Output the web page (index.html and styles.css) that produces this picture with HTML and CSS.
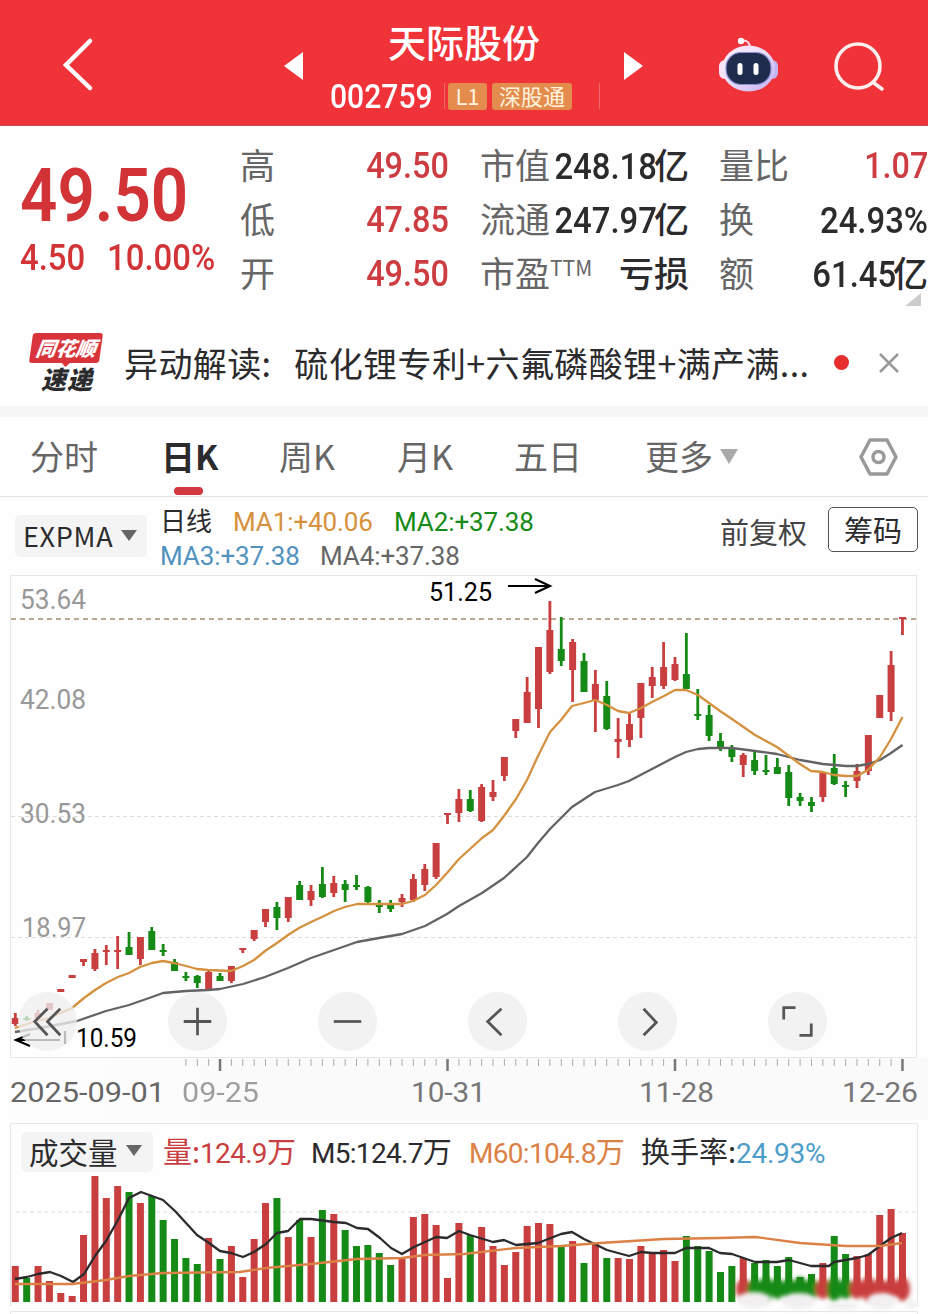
FILE: index.html
```html
<!DOCTYPE html>
<html lang="zh-CN">
<head>
<meta charset="utf-8">
<title>天际股份 002759</title>
<link rel="stylesheet" href="styles.css">
</head>
<body>
<div class="wrap">
	<header class="top">
		<a class="back" href="#"><svg width="34" height="56" viewBox="0 0 34 56"><path d="M30 5 6 29 30 52"/></svg></a>
		<a class="prev" href="#"><svg width="20" height="30" viewBox="0 0 20 30"><path d="M19 1v28L0 15z"/></svg></a>
		<div class="stock">
			<h1>天际股份</h1>
			<div class="code_row">
				<span class="code"><b class="num">002759</b></span>
				<i class="bar"></i>
				<span class="badge l1">L1</span>
				<span class="badge sgt">深股通</span>
				<i class="bar last"></i>
			</div>
		</div>
		<a class="next" href="#"><svg width="20" height="30" viewBox="0 0 20 30"><path d="M1 1v28l19-14z"/></svg></a>
		<a class="robot" href="#">
			<svg width="60" height="58" viewBox="0 0 60 58">
				<defs>
					<linearGradient id="shell" x1="0" y1="0" x2="1" y2="1">
						<stop offset="0" stop-color="#fff0fa"/><stop offset=".5" stop-color="#e9dcfa"/><stop offset="1" stop-color="#c5aef0"/>
					</linearGradient>
				</defs>
				<path d="M21 5q9-2 10 6" fill="none" stroke="#fbdcea" stroke-width="2"/>
				<circle cx="22" cy="5" r="3.2" fill="#fff"/>
				<rect x="0" y="24" width="12" height="19" rx="6" fill="#f7e3f7"/>
				<rect x="47" y="24" width="12" height="19" rx="6" fill="#c4b3f3"/>
				<ellipse cx="29.500" cy="32.500" rx="26.500" ry="23" fill="url(#shell)"/>
				<rect x="7" y="16.500" width="45" height="32" rx="15" fill="#202c4e" stroke="#8e91d8" stroke-width="1.200"/>
				<rect x="18.500" y="27" width="5" height="12" rx="2.500" fill="#fff"/>
				<rect x="34.500" y="27" width="5" height="12" rx="2.500" fill="#fff"/>
			</svg>
		</a>
		<a class="search" href="#"><svg width="54" height="54" viewBox="0 0 54 54"><circle cx="24" cy="25" r="22"/><path d="m40 42 8 6"/></svg></a>
	</header>

	<section class="quote">
		<div class="price">
			<p class="now"><b class="num">49.50</b></p>
			<p class="diff"><b class="num">4.50</b><b class="num pct">10.00%</b></p>
		</div>
		<dl class="c1">
			<div><dt>高</dt><dd class="up"><b class="num">49.50</b></dd></div>
			<div><dt>低</dt><dd class="up"><b class="num">47.85</b></dd></div>
			<div><dt>开</dt><dd class="up"><b class="num">49.50</b></dd></div>
		</dl>
		<dl class="c2">
			<div><dt>市值</dt><dd><b class="num">248.18</b><span>亿</span></dd></div>
			<div><dt>流通</dt><dd><b class="num">247.97</b><span>亿</span></dd></div>
			<div><dt>市盈<sup>TTM</sup></dt><dd><span>亏损</span></dd></div>
		</dl>
		<dl class="c3">
			<div><dt>量比</dt><dd class="up"><b class="num">1.07</b></dd></div>
			<div><dt>换</dt><dd><b class="num">24.93%</b></dd></div>
			<div><dt>额</dt><dd><b class="num">61.45</b><span>亿</span></dd></div>
		</dl>
		<i class="corner"></i>
	</section>

	<section class="news">
		<div class="logo">
			<span class="logo_top">同花顺</span>
			<span class="logo_btm">速递</span>
		</div>
		<p>异动解读:<span>硫化锂专利+六氟磷酸锂+满产满...</span></p>
		<i class="dot"></i>
		<svg class="close" width="22" height="22" viewBox="0 0 22 22"><path d="m2 2 18 18M20 2 2 20"/></svg>
	</section>

	<ul class="tabs">
		<li>分时</li>
		<li class="on">日K</li>
		<li>周K</li>
		<li>月K</li>
		<li>五日</li>
		<li class="more">更多<i class="arrow"></i></li>
		<li class="setting"><svg width="42" height="40" viewBox="0 0 42 40"><path d="M12 3h17l9 17-9 17H12L3 20z"/><circle cx="20.500" cy="20" r="5.500"/></svg></li>
	</ul>

	<section class="indicator">
		<div class="select">EXPMA<i class="arrow"></i></div>
		<div class="ma">
			<p><span class="day">日线</span><span class="ma1">MA1:+40.06</span><span class="ma2">MA2:+37.38</span></p>
			<p><span class="ma3">MA3:+37.38</span><span class="ma4">MA4:+37.38</span></p>
		</div>
		<span class="fq">前复权</span>
		<span class="chip">筹码</span>
	</section>

	<section class="kline">
		<svg id="kline" width="928" height="548" viewBox="0 575 928 548"></svg>
		<div class="tools">
			<button><svg viewBox="0 0 60 60"><path d="M43 17 30 30l13 14M30 17 17 30l13 14"/></svg></button>
			<button><svg viewBox="0 0 60 60"><path d="M16 30h28M30 16v28"/></svg></button>
			<button><svg viewBox="0 0 60 60"><path d="M16 30h28"/></svg></button>
			<button><svg viewBox="0 0 60 60"><path d="M34 17 20 30l14 14"/></svg></button>
			<button><svg viewBox="0 0 60 60"><path d="m26 17 13 14-13 13"/></svg></button>
			<button><svg viewBox="0 0 60 60"><path d="M16 28V16h12M44 32v12H32"/></svg></button>
		</div>
	</section>

	<section class="volume">
		<div class="vol_head">
			<div class="select">成交量<i class="arrow"></i></div>
			<span class="v1">量:<b>124.9</b>万</span>
			<span class="v2"><b>M5:124.7</b>万</span>
			<span class="v3"><b>M60:104.8</b>万</span>
			<span class="v4">换手率:<b>24.93%</b></span>
		</div>
		<svg id="volume" width="928" height="140" viewBox="0 1174 928 140"></svg>
	</section>
</div>
<script src="chart.js"></script>
</body>
</html>
```
FILE: styles.css
```css
* {margin:0; padding:0; box-sizing:border-box}
li {list-style:none}
i {font-style:normal}
a {text-decoration:none; color:inherit}
svg {display:block}
body {
	width:928px;
	height:1314px;
	overflow:hidden;
	background-color:#fefefe;
	font-family:"Noto Sans CJK SC", sans-serif;
	color:#2b2b2d;
}
.wrap {width:928px}
.num {
	display:inline-block;
	font-family:Roboto, "Noto Sans CJK SC", sans-serif;
	font-weight:500;
	transform:scaleX(.9);
	transform-origin:right center;
}

/* header */
.top {
	display:grid;
	grid-template-columns:284px 46px 270px 119px 115px 94px;
	height:126px;
	background-color:#f03239;
	border-bottom:1px solid #c4474f;
	color:#fff;
}
.back {padding:36px 0 0 60px}
.back path {fill:none; stroke:#fff; stroke-width:4.5; stroke-linecap:round}
.prev, .next {padding-top:51px}
.next {padding-left:23px}
.prev path, .next path {fill:#fff}
.stock h1 {
	height:67px;
	padding-top:15px;
	font-size:38px;
	font-weight:500;
	line-height:52px;
	text-align:center;
	text-indent:-2px;
}
.code_row {display:flex; align-items:center; height:58px}
.code {width:114px; height:40px}
.code .num {font-size:34px; line-height:40px; font-weight:500; transform-origin:left center; transform:scaleX(.885)}
.bar {width:1px; height:26px; background-color:#f4686b}
.bar.last {margin-left:27px}
.badge {
	height:27px;
	border-radius:3px;
	background-color:#e38c4d;
	font-size:22px;
	line-height:25px;
	text-align:center;
	color:#fff3df;
}
.l1 {width:39px; margin-left:3px}
.sgt {width:80px; margin-left:5px}
.robot {padding-top:36px}
.search {padding-top:41px}
.search circle, .search path {fill:none; stroke:#ffeeee; stroke-width:3.6; stroke-linecap:round}

/* quote */
.quote {
	position:relative;
	display:grid;
	grid-template-columns:240px 240px 239px 209px;
	height:196px;
	padding-top:13px;
}
.price {padding-left:20px; color:#d23336}
.price .num {transform-origin:left center}
.now {height:93px; padding-top:15px}
.now .num {font-size:74px; line-height:84px; font-weight:600; transform:scaleX(.885)}
.diff {display:flex; height:44px; font-size:37px; line-height:52px}
.diff .num {width:87px; font-weight:500; transform:scaleX(.89)}
.quote dl {width:209px}
.quote dl > div {display:flex; justify-content:space-between; align-items:center; height:54px}
.quote dt {font-size:35px; line-height:55px; height:60px; color:#666; white-space:nowrap}
.quote dt sup {font-size:21px; line-height:1; vertical-align:11px; font-weight:400; letter-spacing:0}
.quote dd {display:flex; align-items:center; font-size:35px; font-weight:500; line-height:55px; white-space:nowrap}
.quote dd span {height:60px; margin-left:-3px}
.quote dd .num {font-size:36.5px; margin-left:-20px}
.quote dd.up {color:#cc3c40}
.quote dd.up .num {font-size:36px}
.corner {
	position:absolute;
	right:7px;
	bottom:16px;
	border-left:16px solid transparent;
	border-bottom:13px solid #ccc;
}

/* news */
.news {
	display:flex;
	align-items:center;
	height:95px;
	padding-bottom:12px;
	border-bottom:11px solid #f6f6f6;
}
.logo {flex:none; width:76px; margin:10px 19px 0 29px; font-style:italic; font-weight:900; text-align:center}
.logo span {display:block}
.logo_top {
	position:relative;
	width:70px;
	height:30px;
	margin-left:2px;
	border-radius:3px;
	background-color:#d9343b;
	color:#fff;
	font-size:20px;
	line-height:29px;
	transform:skewX(-8deg);
}
.logo_top:after {
	content:"";
	position:absolute;
	left:32px;
	top:29px;
	border-top:5px solid #d9343b;
	border-left:5px solid transparent;
	border-right:5px solid transparent;
}
.logo_btm {font-size:25px; line-height:30px; letter-spacing:1px}
.news p {flex:none; width:693px; font-size:34px; white-space:nowrap; padding-top:8px; letter-spacing:.38px}
.news p span {margin-left:23px}
.dot {flex:none; width:15px; height:15px; margin:9px 0 0 17px; border-radius:50%; background-color:#e62e2e}
.close {flex:none; margin:10px 0 0 29px}
.close path {fill:none; stroke:#999; stroke-width:2.5}

/* period tabs */
.tabs {
	display:grid;
	grid-template-columns:161px 118px 118px 117px 131px 213px 70px;
	height:80px;
	border-bottom:1px solid #e4e4e4;
	font-size:34px;
	line-height:77px;
	color:#666;
}
.tabs li:first-child {padding-left:30px}
.tabs li.on {color:#2b2b2d; font-weight:700; position:relative}
.tabs li.on:after {
	content:"";
	position:absolute;
	left:13px;
	bottom:1px;
	width:29px;
	height:8px;
	border-radius:4px;
	background-color:#d2383e;
}
.arrow {
	display:inline-block;
	border-top:11px solid #666;
	border-left:8px solid transparent;
	border-right:8px solid transparent;
}
.more .arrow {margin-left:7px; border-width:15px 9px 0; border-top-color:#aaa; vertical-align:6px}
.setting {padding-top:20px}
.setting path, .setting circle {fill:none; stroke:#999; stroke-width:3.5; stroke-linejoin:round}

/* indicator */
.indicator {display:flex; height:78px; padding-left:15px}
.indicator > * {flex:none}
.select {
	display:flex;
	align-items:center;
	border-radius:5px;
	background-color:#f4f4f4;
	white-space:nowrap;
}
.indicator .select {width:132px; height:42px; margin-top:18px; padding:0 0 1px 8px; font-size:27px; letter-spacing:.7px}
.indicator .select .arrow {margin-left:8px}
.ma {width:573px; padding:8px 0 0 13px; font-family:Roboto, "Noto Sans CJK SC", sans-serif; font-size:26px; line-height:34px; letter-spacing:-.1px}
.ma p {display:flex; height:34px}
.day {width:73px}
.ma1 {width:161px; color:#d7913c}
.ma2 {color:#168a16}
.ma3 {width:160px; color:#5192bf}
.ma4 {color:#666}
.fq {width:108px; padding-top:13px; font-size:29px; color:#444}
.chip {
	width:90px;
	height:45px;
	margin-top:10px;
	border:1px solid #555;
	border-radius:5px;
	font-size:29px;
	line-height:43px;
	text-align:center;
}

/* k line */
.kline {position:relative; height:548px}
.kline text, .volume text {font-family:Roboto, sans-serif}
.box {fill:none; stroke:#e6e6e6}
.grid {stroke:#ddd; stroke-dasharray:4 3}
.now_line {stroke:#a58c72; stroke-width:1.5; stroke-dasharray:5 4}
.red {fill:#c93e3e}
.green {fill:#168a16}
.line {fill:none; stroke-width:2.3; stroke-linejoin:round}
.l_orange {stroke:#d4913f}
.l_grey {stroke:#636365}
.l_black {stroke:#2b2b2d}
.l_deep {stroke:#dc8145}
.scale {font-size:27px; fill:#999}
.date {font-size:28px; fill:#777}
.date.first {fill:#666}
.mark {font-size:26px; fill:#000}
.pointer {fill:none; stroke:#000; stroke-width:2.2}
.tick {stroke:#aaa}
.tick.big {stroke:#777; stroke-width:2.5}
.tools {
	position:absolute;
	left:18px;
	top:417px;
	display:flex;
	gap:91px;
}
.tools button {
	width:59px;
	height:59px;
	border:0;
	border-radius:50%;
	background-color:rgba(238,238,238,.78);
}
.tools path {fill:none; stroke:#555; stroke-width:2.8}

/* volume */
.volume {height:191px}
.vol_head {
	display:flex;
	width:908px;
	height:51px;
	margin-left:10px;
	padding:8px 0 0 10px;
	border:1px solid #e6e6e6;
	border-bottom:0;
	font-size:29px;
	line-height:36px;
	white-space:nowrap;
}
.vol_head > * {flex:none}
.vol_head b {font-family:Roboto, sans-serif; font-size:28px; font-weight:400; letter-spacing:-.7px}
.vol_head .select {width:132px; height:40px; padding:0 0 3px 8px; font-size:29.5px}
.vol_head .select .arrow {margin-left:8px}
.vol_head span {height:40px}
.v1 {width:148px; margin-left:10px; color:#c93e40}
.v2 {width:158px}
.v3 {width:172px; color:#dc8145}
.v4 b {color:#4d9dca; letter-spacing:-.3px}
```
FILE: chart.js
```js
// 图表左起点与每根K线间距
const startX = 15.3;
const stepX = 11.374;

// [涨跌, 最高, 实体上, 实体下, 最低, 成交量柱顶]
const days = [
	['r',1013,1018,1024,1026,1266], ['g',1016,1018,1020,1021,1278], ['r',1010,1013,1018,1018,1266], ['r',1003,1003,1010,1010,1281],
	['r',989,989,992,992,1293], ['r',975,975,978,978,1296], ['r',959,959,962,966,1235], ['r',949,953,969,971,1176],
	['r',945,950,952,965,1198], ['r',936,950,952,969,1186], ['g',932,947,955,955,1192], ['r',937,937,959,965,1203],
	['g',927,931,950,950,1196], ['g',944,950,952,956,1220], ['g',959,962,971,971,1239], ['g',972,976,978,981,1258],
	['g',975,976,983,988,1264], ['r',969,972,989,989,1238], ['g',973,976,981,981,1259], ['r',966,966,981,983,1246],
	['r',948,948,950,953,1277], ['r',930,930,939,941,1239], ['r',909,909,922,927,1203], ['g',902,907,918,930,1198],
	['r',897,897,918,922,1237], ['g',881,885,900,900,1220], ['r',885,891,900,906,1237], ['g',867,884,897,898,1210],
	['r',876,883,893,897,1214], ['g',880,884,890,902,1230], ['g',875,885,887,890,1246], ['g',886,887,902,905,1245],
	['g',900,905,907,913,1253], ['g',900,905,909,912,1265], ['r',894,898,902,907,1259], ['r',874,879,900,902,1217],
	['r',864,869,885,891,1214], ['r',843,843,877,879,1225], ['r',813,813,815,824,1278], ['r',789,799,813,822,1223],
	['g',790,799,811,812,1235], ['r',784,787,821,822,1227], ['r',780,792,797,801,1246], ['r',757,757,776,781,1265],
	['r',719,719,731,738,1252], ['r',677,692,723,723,1226], ['r',647,647,709,728,1223], ['r',601,630,672,674,1224],
	['g',617,649,661,666,1246], ['r',639,642,670,702,1241], ['g',653,661,692,692,1263], ['r',670,684,700,732,1244],
	['g',681,696,729,730,1258], ['r',718,739,742,758,1258], ['r',713,724,740,747,1259], ['r',683,683,718,738,1246],
	['r',667,677,686,698,1252], ['r',642,667,686,689,1250], ['r',657,664,680,681,1261], ['g',633,674,689,689,1236],
	['g',689,714,716,720,1246], ['g',705,715,736,741,1251], ['g',733,741,748,751,1272], ['g',745,748,757,762,1266],
	['r',753,755,765,777,1258], ['g',752,760,771,775,1263], ['g',755,770,772,775,1260], ['g',758,767,774,774,1266],
	['g',765,772,798,806,1257], ['g',793,797,801,806,1277], ['g',797,802,806,812,1274], ['r',773,773,797,802,1263],
	['g',754,768,784,785,1236], ['g',781,785,787,797,1254], ['r',764,771,781,788,1256], ['r',735,735,771,775,1254],
	['r',695,695,718,718,1215], ['r',651,665,712,721,1209], ['r',617,617,619,635,1233]
];

const ma1 = '15,1028 30,1023 49,1018 72,1008 84,998 95,990 106,983 118,977 129,973 140,967 152,963 163,961 174,963 186,966 197,969 208,970 231,971 243,966 254,960 265,951 277,943 288,935 299,928 311,922 322,917 334,911 345,907 357,904 402,904 413,901 425,895 436,885 447,873 459,859 470,849 482,838 493,830 504,816 516,799 527,780 538,756 550,732 561,720 572,706 584,703 595,700 607,705 618,711 629,713 641,708 652,702 664,696 675,690 686,690 698,695 709,703 720,711 732,719 755,735 777,747 789,756 800,764 811,771 823,772 834,775 846,776 857,776 868,770 880,757 891,739 902.5,717';
const ma4 = '15,1032 40,1028 77,1021 106,1011 129,1005 152,997 163,993 186,991 208,990 220,989 243,984 265,977 288,968 311,958 334,950 357,942 379,938 402,934 425,926 447,914 459,906 482,893 504,878 527,857 538,843 550,829 572,807 595,792 618,785 629,781 652,769 675,757 686,752 698,749 709,748 732,748 755,751 777,754 800,760 823,764 846,766 857,766 868,764 880,760 891,753 902.5,745';
const m5 = '15,1279 27,1277 38,1274 50,1272 61,1276 73,1282 84,1274 95,1256 106,1241 118,1220 129,1198 141,1192 152,1196 163,1200 175,1211 186,1223 197,1235 209,1243 220,1251 231,1253 243,1257 254,1252 266,1244 277,1233 288,1231 300,1219 311,1219 334,1222 346,1223 357,1228 368,1229 380,1238 391,1248 402,1254 414,1247 436,1237 447,1238 459,1231 470,1235 493,1242 504,1240 516,1245 538,1243 561,1234 572,1232 584,1239 607,1250 629,1256 641,1252 652,1253 675,1253 686,1248 709,1248 720,1253 732,1254 755,1262 777,1262 789,1260 800,1263 811,1266 829,1266 834,1262 857,1258 868,1255 880,1246 891,1238 902,1233';
const m60 = '15,1284 72,1284 106,1280 129,1276 163,1273 240,1272 266,1268 311,1264 357,1259 402,1258 425,1255 464,1254 516,1248 561,1246 600,1243 664,1239 720,1238 755,1237 800,1243 846,1246 880,1246 902,1243';

function rect(cls, x, y, w, h){
	return `<rect class="${cls}" x="${x}" y="${y}" width="${w}" height="${h}"/>`;
}
function label(cls, x, y, w, str){
	return `<text class="${cls}" x="${x}" y="${y}" textLength="${w}" lengthAdjust="spacingAndGlyphs">${str}</text>`;
}

function drawKline(){
	let html = `<defs><linearGradient id="axis" x1="0" x2="1"><stop offset="0" stop-color="#fefefe"/><stop offset=".3" stop-color="#fafafa"/><stop offset="1" stop-color="#fafafa"/></linearGradient></defs>`;
	html += `<rect x="0" y="1058" width="928" height="62" fill="url(#axis)"/>`;
	html += rect('box', 10.5, 575.5, 906, 482);
	html += `<path class="grid" d="M11 816.5H917M11 937.5H917"/>`;
	html += label('scale', 20, 609, 66, '53.64') + label('scale', 20, 709, 66, '42.08');
	html += label('scale', 20, 823, 66, '30.53') + label('scale', 22, 937, 64, '18.97');
	html += `<path class="now_line" d="M11 619H917"/>`;

	days.forEach(function(d, i){
		const x = startX + i * stepX;
		const cls = d[0] === 'r' ? 'red' : 'green';
		html += rect(cls, x - 1.4, d[1], 2.8, d[4] - d[1]);
		html += rect(cls, x - 3.5, d[2], 7, d[3] - d[2]);
		// 时间刻度
		if(i > 14){
			const big = (i - 18) % 20 === 0;
			html += `<path class="tick${big ? ' big' : ''}" d="M${x} 1059V${big ? 1071 : 1066}"/>`;
		}
	});

	html += `<polyline class="line l_grey" points="${ma4}"/>`;
	html += `<polyline class="line l_orange" points="${ma1}"/>`;
	html += label('mark', 429, 601, 63, '51.25') + `<path class="pointer" d="M508 586H549M535 579l15 7-15 7"/>`;
	html += label('mark', 76, 1047, 61, '10.59') + `<path class="pointer" d="M60 1040H17M30 1034l-14 6 14 6M65 1031v13"/>`;
	html += label('date first', 10, 1102, 155, '2025-09-01');
	html += `<g opacity=".7">${label('date', 182, 1102, 77, '09-25')}</g>`;
	html += label('date', 411, 1102, 75, '10-31') + label('date', 639, 1102, 75, '11-28') + label('date', 842, 1102, 76, '12-26');
	document.querySelector('#kline').innerHTML = html;
}

function drawVolume(){
	let html = `<defs><filter id="soft" x="-10%" y="-50%" width="120%" height="200%"><feGaussianBlur stdDeviation="2"/></filter></defs>`;
	html += `<path class="box" d="M10.500 1174V1306M917.500 1174V1306M10.500 1314V1311.500H917.500V1314"/>`;
	html += `<path class="grid" d="M16 1212H917"/>`;
	let blur = '';
	days.forEach(function(d, i){
		const x = startX + i * stepX;
		const cls = d[0] === 'r' ? 'red' : 'green';
		html += rect(cls, x - 3.5, d[5], 7, (i > 63 ? 1288 : 1302) - d[5]);
		if(i > 63) blur += `<ellipse class="${cls}" cx="${x}" cy="1289" rx="7.5" ry="${i % 3 ? 10 : 12}"/>`;
	});
	html += `<g filter="url(#soft)">${blur}</g>`;
	// 右下角柔化水印
	html += `<g filter="url(#soft)" fill="#f1efef"><ellipse cx="754" cy="1300" rx="17" ry="8"/><ellipse cx="799" cy="1301" rx="17" ry="8"/><ellipse cx="842" cy="1306" rx="16" ry="4"/><ellipse cx="882" cy="1301" rx="15" ry="8"/><ellipse cx="912" cy="1304" rx="6" ry="4"/></g>`;
	html += `<polyline class="line l_black" points="${m5}"/>`;
	html += `<polyline class="line l_deep" points="${m60}"/>`;
	document.querySelector('#volume').innerHTML = html;
}

drawKline();
drawVolume();
```
